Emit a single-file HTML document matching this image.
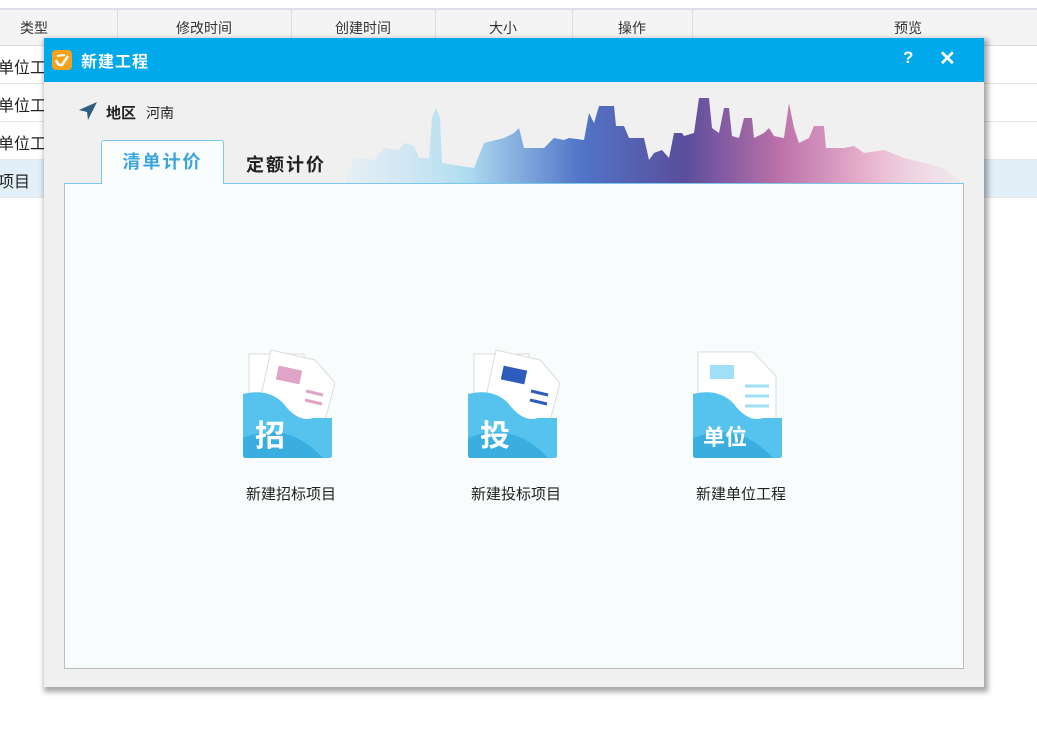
<!DOCTYPE html>
<html><head><meta charset="utf-8"><style>
*{margin:0;padding:0;box-sizing:border-box}
body{width:1037px;height:740px;background:#fff;position:relative;overflow:hidden;font-family:"Liberation Sans","Noto Sans CJK SC",sans-serif;font-size:14px;color:#222}
.abs{position:absolute}
.hdr{top:8px;left:0;width:1037px;height:38px;background:#f4f4f4;border-top:2px solid #dde;border-bottom:1px solid #ddd}
.hdr span{position:absolute;top:8px;font-size:14px;color:#333;transform:translateX(-50%)}
.sep{position:absolute;top:0;width:1px;height:36px;background:#ddd}
.row{left:0;width:1037px;height:38px;border-bottom:1px solid #e6e6e6}
.row span{position:absolute;left:-2px;top:8px;font-size:16px}
.dlg{left:44px;top:38px;width:940px;height:649px;background:#f0f0f0;box-shadow:2px 3px 5px 2px rgba(0,0,0,.35)}
.title{left:0;top:0;width:940px;height:44px;background:#00a8ec;color:#fff;font-weight:bold;font-size:16px}
.panel{left:20px;top:145px;width:900px;height:486px;background:#f8fcfc;border:1px solid #bbb;border-top:1px solid #7cc8e8}
.tab{left:57px;top:102px;width:123px;height:44px;background:#fafdfd;border:1px solid #7cc8e8;border-bottom:none;border-radius:3px 3px 0 0;color:#3aa6dd;font-size:18px;font-weight:bold;text-align:center;line-height:42px;letter-spacing:2px;z-index:2}
.lbl{font-size:15px;transform:translateX(-50%);top:299px;white-space:nowrap}
</style></head><body>
<div class="abs hdr">
<div class="sep" style="left:117px"></div><div class="sep" style="left:291px"></div><div class="sep" style="left:435px"></div><div class="sep" style="left:572px"></div><div class="sep" style="left:692px"></div>
<span style="left:34px">类型</span><span style="left:204px">修改时间</span><span style="left:363px">创建时间</span><span style="left:503px">大小</span><span style="left:632px">操作</span><span style="left:908px">预览</span>
</div>
<div class="abs row" style="top:46px"><span>单位工</span></div>
<div class="abs row" style="top:84px"><span>单位工</span></div>
<div class="abs row" style="top:122px"><span>单位工</span></div>
<div class="abs row" style="top:160px;background:#e3eff8"><span>项目</span></div>

<div class="abs dlg">
 <div class="abs title">
  <svg class="abs" style="left:8px;top:12px" width="20" height="20" viewBox="0 0 20 20"><rect width="20" height="20" rx="4" fill="#f7a21b"/><path d="M4 10 Q6 16 10 15 L16 6" stroke="#fff" stroke-width="2.5" fill="none"/><path d="M5 6 L13 5" stroke="#fff" stroke-width="2" fill="none"/></svg>
  <span class="abs" style="left:37px;top:10px;letter-spacing:1px">新建工程</span>
  <span class="abs" style="left:859px;top:10px;font-size:17px">?</span>
  <span class="abs" style="left:895px;top:8px;font-size:20px">✕</span>
 </div>
 <svg class="abs" style="left:34px;top:63px" width="20" height="20" viewBox="0 0 20 20"><path d="M19 1 L1 9 L9 11 L10 19 Z" fill="#2d5d83"/></svg>
 <span class="abs" style="left:62px;top:64px;font-weight:bold;font-size:15px">地区</span>
 <span class="abs" style="left:102px;top:65px;font-size:14px">河南</span>
 <svg class="abs" style="left:300px;top:60px;opacity:.82" width="620" height="86" viewBox="0 0 620 86">
  <defs><linearGradient id="g" x1="0" x2="1"><stop offset="0" stop-color="#d8ecf8" stop-opacity=".5"/><stop offset=".2" stop-color="#9fd8f0"/><stop offset=".38" stop-color="#2f5bc0"/><stop offset=".55" stop-color="#3a2a8a"/><stop offset=".7" stop-color="#b0559a"/><stop offset=".85" stop-color="#e8a8c8"/><stop offset="1" stop-color="#f4dde8" stop-opacity=".4"/></linearGradient></defs>
  <path fill="url(#g)" d="M0 86 L10 60 L30 62 L40 50 L55 52 L60 45 L70 48 L75 60 L85 60 L88 20 L92 10 L96 20 L98 65 L130 70 L140 45 L160 40 L170 35 L175 30 L180 50 L200 50 L210 40 L220 42 L225 40 L240 42 L245 15 L250 25 L255 8 L270 8 L272 28 L280 28 L285 40 L300 40 L305 62 L310 55 L318 52 L325 60 L330 35 L338 35 L340 38 L350 35 L355 0 L365 0 L368 30 L375 35 L380 10 L385 10 L388 38 L395 40 L400 20 L408 20 L410 40 L420 35 L425 30 L430 38 L440 40 L445 5 L450 30 L455 45 L465 40 L470 28 L480 28 L482 50 L500 50 L510 48 L520 55 L540 52 L560 60 L600 70 L620 86 Z"/>
 </svg>
 <div class="abs tab">清单计价</div>
 <span class="abs" style="left:202px;top:113px;font-size:18px;font-weight:bold;letter-spacing:2px">定额计价</span>
 <div class="abs panel">
  <svg class="abs" style="left:178px;top:164px" width="92" height="110" viewBox="0 0 92 110">
   <rect x="6" y="6" width="55" height="60" fill="#fff" stroke="#ddd"/>
   <path d="M28 2 L72 12 L92 35 L80 80 L15 62 Z" fill="#fff" stroke="#ddd"/>
   <rect x="34" y="20" width="24" height="14" fill="#e0a4c6" transform="rotate(12 46 27)"/>
   <path d="M63 43 L80 47 M62 52 L79 56" stroke="#e0a4c6" stroke-width="3"/>
   <path d="M0 46 Q25 40 40 55 Q55 75 70 70 L89 70 L89 108 Q89 110 86 110 L3 110 Q0 110 0 107 Z" fill="#55c3ee"/>
   <path d="M0 90 Q45 72 80 110 L3 110 Q0 110 0 107 Z" fill="#3aaedf"/>
   <text x="12" y="98" fill="#fff" font-size="30" font-weight="bold" font-family="Noto Sans CJK SC,sans-serif">招</text>
  </svg>
  <svg class="abs" style="left:403px;top:164px" width="92" height="110" viewBox="0 0 92 110">
   <rect x="6" y="6" width="55" height="60" fill="#fff" stroke="#ddd"/>
   <path d="M28 2 L72 12 L92 35 L80 80 L15 62 Z" fill="#fff" stroke="#ddd"/>
   <rect x="34" y="20" width="24" height="14" fill="#2e5cbd" transform="rotate(12 46 27)"/>
   <path d="M63 43 L80 47 M62 52 L79 56" stroke="#2e5cbd" stroke-width="3"/>
   <path d="M0 46 Q25 40 40 55 Q55 75 70 70 L89 70 L89 108 Q89 110 86 110 L3 110 Q0 110 0 107 Z" fill="#55c3ee"/>
   <path d="M0 90 Q45 72 80 110 L3 110 Q0 110 0 107 Z" fill="#3aaedf"/>
   <text x="12" y="98" fill="#fff" font-size="30" font-weight="bold" font-family="Noto Sans CJK SC,sans-serif">投</text>
  </svg>
  <svg class="abs" style="left:628px;top:164px" width="92" height="110" viewBox="0 0 92 110">
   <path d="M5 4 L60 4 L83 28 L83 80 L5 80 Z" fill="#fff" stroke="#ddd"/>
   <rect x="17" y="17" width="24" height="14" fill="#9fe0f6"/>
   <path d="M52 38 L76 38 M52 48 L76 48 M52 58 L76 58" stroke="#9fe0f6" stroke-width="3"/>
   <path d="M0 46 Q25 40 40 55 Q55 75 70 70 L89 70 L89 108 Q89 110 86 110 L3 110 Q0 110 0 107 Z" fill="#55c3ee"/>
   <path d="M0 90 Q45 72 80 110 L3 110 Q0 110 0 107 Z" fill="#3aaedf"/>
   <text x="10" y="97" fill="#fff" font-size="22" font-weight="bold" font-family="Noto Sans CJK SC,sans-serif">单位</text>
  </svg>
  <span class="abs lbl" style="left:226px">新建招标项目</span>
  <span class="abs lbl" style="left:451px">新建投标项目</span>
  <span class="abs lbl" style="left:676px">新建单位工程</span>
 </div>
</div>
</body></html>
